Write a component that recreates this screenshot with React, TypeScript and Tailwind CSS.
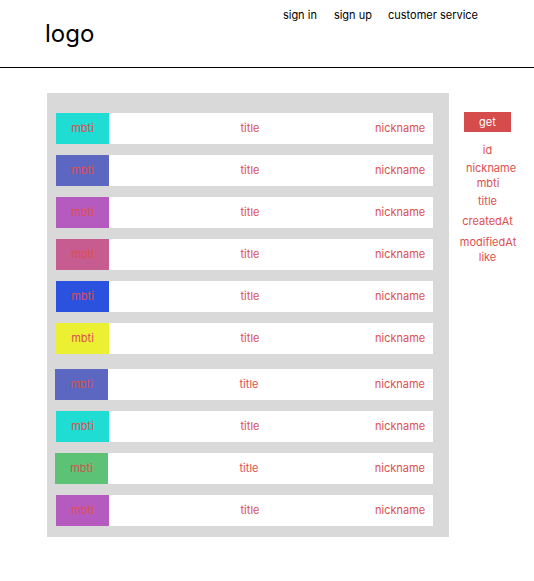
const rows = [
  { color: "bg-[#1fddd2]", gap: "mt-0", shift: "" },
  { color: "bg-[#5b67c1]", gap: "mt-[11px]", shift: "" },
  { color: "bg-[#b55bc0]", gap: "mt-[11px]", shift: "" },
  { color: "bg-[#c65c90]", gap: "mt-[11px]", shift: "" },
  { color: "bg-[#2b52de]", gap: "mt-[11px]", shift: "" },
  { color: "bg-[#ecf033]", gap: "mt-[11px]", shift: "" },
  { color: "bg-[#5b67c1]", gap: "mt-[15px]", shift: "-ml-px" },
  { color: "bg-[#1fddd2]", gap: "mt-[11px]", shift: "" },
  { color: "bg-[#5bc276]", gap: "mt-[11px]", shift: "-ml-px" },
  { color: "bg-[#b55bc0]", gap: "mt-[11px]", shift: "" },
];

const fields = [
  { label: "id", cls: "mt-[10px]" },
  { label: "nickname", cls: "mt-[2px] ml-[7px]" },
  { label: "mbti", cls: "-mt-[1px] ml-[1px]" },
  { label: "title", cls: "mt-[2px]" },
  { label: "createdAt", cls: "mt-[4px]" },
  { label: "modifiedAt", cls: "mt-[5px] ml-[1px]" },
  { label: "like", cls: "-mt-[1px]" },
];

export default function App() {
  return (
    <div className="min-h-[581px] bg-white font-['Inter','Noto_Sans',sans-serif] text-black">
      <header className="flex h-[68px] border-b border-black">
        <div className="pl-[45px] pt-[18px] text-[24px] leading-[32px]">logo</div>
        <nav className="ml-auto mr-[56px] flex gap-[16px] pt-[7px] text-[11px] leading-[16px]">
          <span className="mr-px">sign in</span>
          <span>sign up</span>
          <span>customer service</span>
        </nav>
      </header>

      <main className="flex items-start pl-[47px] pt-[25px]">
        <section className="w-[402px] shrink-0 bg-[#d9d9d9] pb-[11px] pl-[9px] pr-[16px] pt-[20px]">
          {rows.map((row, i) => (
            <div key={i} className={`flex h-[31px] bg-white text-[11px] text-[#dc5050] ${row.gap}`}>
              <div className={`flex w-[53px] shrink-0 items-center justify-center ${row.color} ${row.shift}`}>mbti</div>
              <div className="flex w-[266px] shrink-0 items-center justify-center pl-[16px]">title</div>
              <div className="flex flex-1 items-center justify-end pr-[8px]">nickname</div>
            </div>
          ))}
        </section>

        <aside className="ml-[15px] mt-[19px] flex w-[47px] shrink-0 flex-col items-center text-[11px] leading-[16px] text-[#dc5050]">
          <button className="h-[20px] w-[47px] bg-[#d64b4b] text-white">get</button>
          {fields.map((f) => (
            <span key={f.label} className={`whitespace-nowrap ${f.cls}`}>
              {f.label}
            </span>
          ))}
        </aside>
      </main>
    </div>
  );
}
